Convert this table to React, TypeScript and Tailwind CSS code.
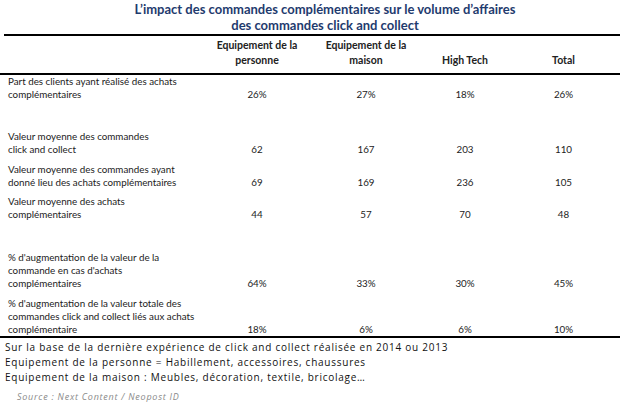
const cols = "grid grid-cols-[197px_104px_114px_84px_113px]";

const rows: { label: string[]; values: string[]; pt: string }[] = [
  {
    label: ["Part des clients ayant réalisé des achats", "complémentaires"],
    values: ["26%", "27%", "18%", "26%"],
    pt: "pt-0",
  },
  {
    label: ["Valeur moyenne des commandes", "click and collect"],
    values: ["62", "167", "203", "110"],
    pt: "pt-[29px]",
  },
  {
    label: ["Valeur moyenne des commandes ayant", "donné lieu des achats complémentaires"],
    values: ["69", "169", "236", "105"],
    pt: "pt-[7px]",
  },
  {
    label: ["Valeur moyenne des achats", "complémentaires"],
    values: ["44", "57", "70", "48"],
    pt: "pt-[6px]",
  },
  {
    label: [
      "% d'augmentation de la valeur de la",
      "commande en cas d'achats",
      "complémentaires",
    ],
    values: ["64%", "33%", "30%", "45%"],
    pt: "pt-[30px]",
  },
  {
    label: [
      "% d'augmentation de la valeur totale des",
      "commandes click and collect liés aux achats",
      "complémentaire",
    ],
    values: ["18%", "6%", "6%", "10%"],
    pt: "pt-[7px]",
  },
];

function Row({ label, values, pt }: { label: string[]; values: string[]; pt: string }) {
  return (
    <div className={`${cols} items-end pl-[8px] ${pt}`}>
      <div>
        {label.map((l) => (
          <div key={l} className="whitespace-nowrap">
            {l}
          </div>
        ))}
      </div>
      {values.map((v, i) => (
        <div key={i} className="text-center">
          {v}
        </div>
      ))}
    </div>
  );
}

export default function App() {
  return (
    <div className="w-[620px] h-[406px] bg-white overflow-hidden font-['Lato',sans-serif] text-[#222]">
      {/* title */}
      <div className="pt-[1px] text-center font-bold text-[13px] leading-[16px] text-[#1f3b6e] pl-[30px]">
        <div>L’impact des commandes complémentaires sur le volume d’affaires</div>
        <div>des commandes click and collect</div>
      </div>

      <div className="mt-[1px] ml-[4px] border-t-[2px] border-black" />

      {/* header */}
      <div className={`${cols} items-end pl-[8px] pt-[2px] pb-[5px] font-bold text-[10.5px] leading-[15px]`}>
        <div />
        <div className="text-center">
          Equipement de la
          <br />
          personne
        </div>
        <div className="text-center">
          Equipement de la
          <br />
          maison
        </div>
        <div className="text-center">High Tech</div>
        <div className="text-center">Total</div>
      </div>

      <div className="border-t-[2px] border-black" />

      {/* body */}
      <div className="text-[9.8px] leading-[13px]">
        {rows.map((r) => (
          <Row key={r.label[0]} {...r} />
        ))}
      </div>

      <div className="border-t-[2px] border-black" />

      {/* notes */}
      <div className="pl-[5px] pt-[2px] text-[10px] leading-[15px] tracking-[0.75px] text-[#111] font-['Open_Sans',sans-serif]">
        <div>Sur la base de la dernière expérience de click and collect réalisée en 2014 ou 2013</div>
        <div>Equipement de la personne = Habillement, accessoires, chaussures</div>
        <div>Equipement de la maison : Meubles, décoration, textile, bricolage…</div>
        <div className="pl-[12px] pt-[5px] italic text-[9px] leading-[13px] text-[#8a8a8a]">
          Source : Next Content / Neopost ID
        </div>
      </div>
    </div>
  );
}
